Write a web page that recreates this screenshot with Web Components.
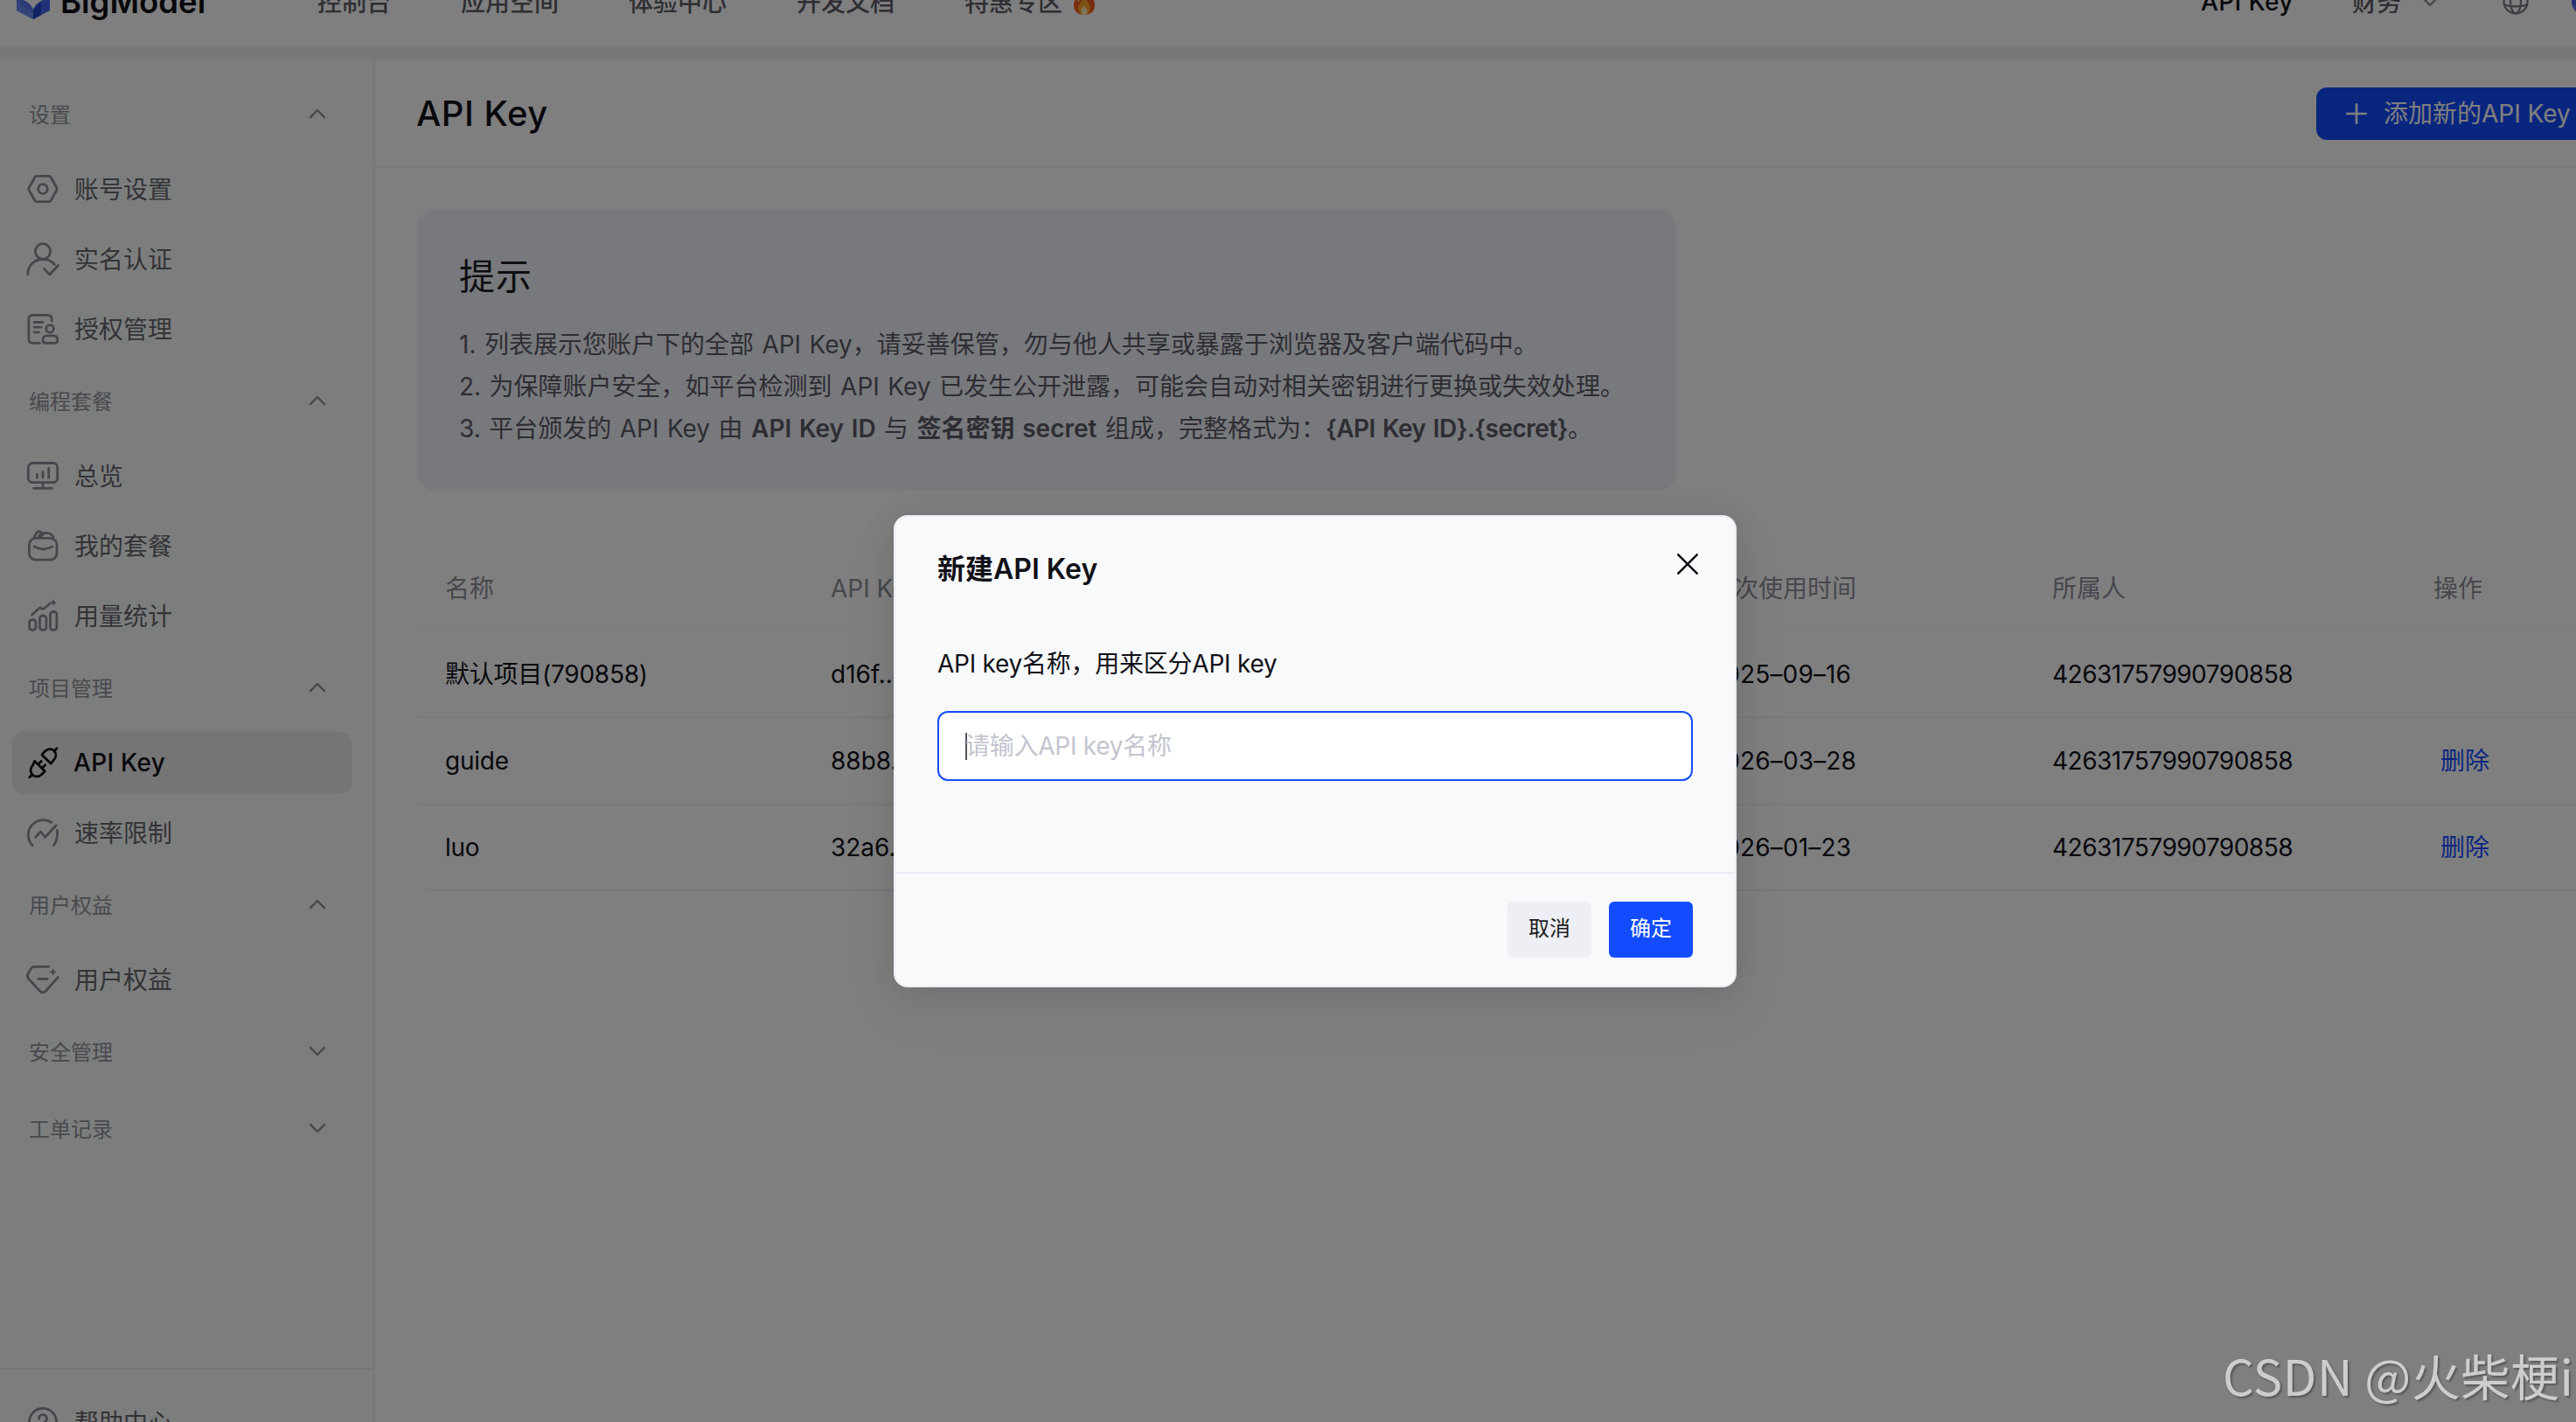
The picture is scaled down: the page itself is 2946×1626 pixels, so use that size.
<!DOCTYPE html>
<html lang="zh-CN">
<head>
<meta charset="utf-8">
<title>API Key</title>
<style>
  html, body { margin: 0; height: 1626px; overflow: hidden; background: #fff; }
  body { font-family: Inter, "Noto Sans CJK SC", sans-serif; font-size: 28px; color: #111118; }
</style>
</head>
<body>
<bm-app></bm-app>
<script>
const ICONS = {
  hex: '<path d="M13 5.4h14c1 0 1.7.5 2.2 1.3l6.7 12c.5.8.5 1.8 0 2.6l-6.7 12c-.5.8-1.2 1.3-2.2 1.3H13c-1 0-1.7-.5-2.2-1.3l-6.700-12c-.5-.8-.5-1.8 0-2.6l6.7-12c.5-.8 1.2-1.3 2.200-1.3z"/><circle cx="20" cy="20" r="5.3"/>',
  user: '<ellipse cx="20" cy="11.5" rx="8.6" ry="8.8"/><path d="M2.8 38c0-10.5 7.2-17.5 17.2-17.5 5.6 0 10.3 2.2 13.4 6"/><path d="M21.6 31.5l6.2 6.500 9.7-10.5"/>',
  doc: '<path d="M16.5 36.4H8.2c-2.5 0-4.3-1.8-4.3-4.3V8.7c0-2.5 1.8-4.3 4.3-4.3h17.7c2.5 0 4.3 1.8 4.3 4.3v2.5"/><path d="M10 12.5h10M10 18.1h8M10 23.8h5.5"/><circle cx="28" cy="19.9" r="4.3"/><path d="M24.5 27.8h7.5c2.8 0 4.8 1.7 4.8 4.6 0 2.6-1 4-3.5 4H23.5c-2.5 0-3.5-1.4-3.5-4 0-2.9 1.9-4.6 4.5-4.6z"/>',
  monitor: '<rect x="3.3" y="5.5" width="33.4" height="22.2" rx="5"/><path d="M20 28v6M9.5 34.4h21M13.4 22.3v-4M20 22.3v-7M26.7 22.3V11.5"/>',
  bag: '<rect x="4.4" y="11.4" width="31.6" height="24.8" rx="7.5"/><path d="M10 20.9c6.5 3.8 14.5 3.8 21 0M10.3 10.5C12 4.5 15 1.8 19 5.5M18 9c3-4.5 10.500-5.5 14 1.5M15.5 9.5c1.5-3 3.5-4.5 6.5-4"/>',
  chart: '<rect x="4.6" y="24.6" width="7.4" height="11.8" rx="3.2"/><rect x="16.5" y="20" width="7.4" height="16.4" rx="3.2"/><rect x="28.5" y="15.5" width="7.4" height="20.9" rx="3.2"/><path d="M7.5 19l8-7.3c1-.9 2-.9 3 0s2 .9 3 0l6.5-5.5"/><path d="M32 .8l1.2 3 3 1.2-3 1.2-1.2 3-1.2-3-3-1.2 3-1.2z" fill="currentColor" stroke="none"/>',
  plug: '<path d="M19 11.2l10.1 9.9 3-3.6c4-4.3 3.2-8.6.7-11.1s-7-2.7-10.7.8zM33 7l3-3.2M10.600 18.2l11.7 11.6-3.3 3.4c-3.7 3.7-8.3 3.4-10.9.8s-3-7.400.6-11.2zM14.5 22.2l3.7-3.7M19 26.5l3.7-3.7M8 33.5l-3.2 3.3"/>',
  gauge: '<path d="M8.2 34.8A17.2 17.2 0 0 1 29.8 8.3M36.3 17.5c.9 6.7-.2 12-3.8 17.3M11.6 25.3l6-6.3 5 6.3L35.2 11.7"/>',
  gem: '<path d="M26.5 5.4H10c-1.6 0-2.6.7-3.4 2L3.2 13c-1.4 2.3-1.2 4.2.5 6.2l13 14c2.2 2.3 4.4 2.3 6.6 0l14-15.7M14.8 19.4h10.4"/><path d="M31.6 7.2l1.3 3 3 1.3-3 1.3-1.3 3-1.3-3-3-1.3 3-1.3z" fill="currentColor" stroke="none"/>',
  help: '<circle cx="20" cy="20" r="15.6"/><path d="M15.5 16.5c0-6.500 9-6.5 9 0 0 3.5-4.5 3.5-4.5 7.5M20 27.500v.5"/>'
};

function define(name, html) {
  const tpl = document.createElement('template');
  tpl.innerHTML = html;
  customElements.define(name, class extends HTMLElement {
    constructor() {
      super();
      this.attachShadow({ mode: 'open' }).appendChild(tpl.content.cloneNode(true));
    }
  });
}

/* elements whose markup depends on their attributes */
function defineWith(name, render) {
  customElements.define(name, class extends HTMLElement {
    connectedCallback() {
      const root = this.shadowRoot || this.attachShadow({ mode: 'open' });
      root.innerHTML = render(this);
    }
  });
}

defineWith('bm-icon', el => `
<style>:host{display:block;width:40px;height:40px;flex:none}svg{display:block;overflow:visible}</style>
<svg width="40" height="40" viewBox="0 0 40 40" fill="none" stroke="currentColor" stroke-width="2.8" stroke-linecap="round" stroke-linejoin="round">${ICONS[el.getAttribute('name')]}</svg>`);

define('bm-chevron', `
<style>
  :host { display: block; flex: none; width: 20px; height: 12px; color: #8f8e99; }
  :host([down]) svg { transform: rotate(180deg); }
  svg { display: block; }
</style>
<svg width="20" height="12" viewBox="0 0 20 12" fill="none" stroke="currentColor" stroke-width="2.4" stroke-linecap="round" stroke-linejoin="round"><path d="M2 10.2L10 2l8 8.2"/></svg>`);

define('bm-logo', `
<style>
  :host { display: flex; align-items: center; gap: 12px; color: #111118; font-size: 36.5px; font-weight: 600; line-height: 44px; width: 344px; }
  svg { display: block; flex: none; }
</style>
<svg width="38" height="42" viewBox="0 0 38 42"><path d="M0 8l10 6c6 4 9 9 9 15v12L0 31z" fill="#5577ee"/><path d="M0 22l19 12v7L0 31z" fill="#6a86f2"/><path d="M38 8l-10 6c-6 4-9 9-9 15v12l19-10z" fill="#4166f0"/><path d="M19 30l9-9v15l-9 5z" fill="#2347c8"/><path d="M8 0h22v19c-6 3-9 6-11 11-2-5-5-8-11-11z" fill="#fff"/></svg>
<span>BigModel</span>`);

define('bm-topbar', `
<style>
  :host { display: block; height: 52px; overflow: hidden; background: #fff; }
  .row { display: flex; align-items: center; height: 100px; margin-top: -48px; padding-left: 19px; }
  nav { display: flex; gap: 80px; color: #5e5d66; font-weight: 500; line-height: 40px; padding-top: 2px; }
  nav span:last-child { display: flex; align-items: center; }
  .fire { margin-left: 13px; }
  .right { display: flex; align-items: center; margin-left: auto; color: #5e5d66; font-weight: 500; line-height: 40px; }
  .key { color: #111118; width: 173px; letter-spacing: .4px; }
  .fin { width: 79px; padding-top: 2px; }
  .globe { margin-left: 73px; margin-right: 49px; }
  .avatar { width: 32px; height: 32px; border-radius: 16px; margin-right: 35px; background: linear-gradient(#4a62e8 60%, #9a9ab4); }
</style>
<div class="row">
  <bm-logo></bm-logo>
  <nav><span>控制台</span><span>应用空间</span><span>体验中心</span><span>开发文档</span>
    <span>特惠专区<svg class="fire" width="24" height="28" viewBox="0 0 24 28"><path d="M11 0c5 4 7 7 7 11 1-1 1.500-2.500 1.500-4C23 10 24 14 24 17c0 7-5 11-12 11S0 24 0 17c0-4 2-7 4-9 0 2 .5 4 2 5 0-5 2-9 5-13z" fill="#f4581c"/><path d="M12 9c4 4 7 7 7 11.5 0 4.5-3 7.5-7 7.5s-7-3-7-7.5C5 16 9 14 12 9z" fill="#fba62a"/><path d="M12 18c2 2 3.500 3.500 3.500 6 0 2.500-1.500 4-3.500 4s-3.500-1.500-3.500-4c0-2.500 1.500-4 3.500-6z" fill="#fff0b0"/></svg></span></nav>
  <div class="right"><span class="key">API Key</span><span class="fin">财务</span><bm-chevron down></bm-chevron>
    <svg class="globe" width="30" height="30" viewBox="0 0 30 30" fill="none" stroke="#7b7a84" stroke-width="2.2"><circle cx="15" cy="15" r="13.5"/><ellipse cx="15" cy="15" rx="6" ry="13.5"/><path d="M2.5 10c7 2 18 2 25 0M1.8 18.5c7 2.500 19 2.500 26.400 0"/></svg>
    <div class="avatar"></div></div>
</div>`);

defineWith('bm-nav-item', el => `
<style>
  :host { display: flex; align-items: center; box-sizing: border-box; width: 390px; height: 72px; padding-left: 16px; gap: 16px; border-radius: 16px; color: #68676f; line-height: 40px; }
  span { padding-top: 2px; }
  bm-icon { color: #8f8d99; }
  :host([active]) { background: #eaeaea; color: #111118; font-weight: 500; letter-spacing: .3px; }
  :host([active]) bm-icon { color: #111118; }
  :host([active]) span { padding-top: 0; margin-left: -1px; }
</style>
<bm-icon name="${el.getAttribute('icon')}"></bm-icon><span><slot></slot></span>`);

defineWith('bm-nav-group', el => `
<style>
  :host { display: flex; flex-direction: column; gap: 8px; margin-top: 8px; }
  .head { display: flex; align-items: center; justify-content: space-between; height: 80px; width: 340px; padding-left: 20px; color: #94939c; font-size: 24px; line-height: 36px; }
  bm-chevron { margin-top: -4px; }
</style>
<div class="head"><span>${el.getAttribute('label')}</span><bm-chevron${el.hasAttribute('closed') ? ' down' : ''}></bm-chevron></div>
<slot></slot>`);

define('bm-sidebar', `
<style>
  :host { display: flex; flex-direction: column; box-sizing: border-box; width: 429px; height: 1558px; flex: none; overflow: hidden; background: #f9fcfa; border-right: 2px solid #efeff0; }
  .menu { flex: none; box-sizing: border-box; height: 1496px; padding: 16px 0 0 13px; }
  .foot { flex: none; border-top: 2px solid #eaebeb; padding: 24px 0 0 13px; }
</style>
<div class="menu">
  <bm-nav-group label="设置"><bm-nav-item icon="hex">账号设置</bm-nav-item><bm-nav-item icon="user">实名认证</bm-nav-item><bm-nav-item icon="doc">授权管理</bm-nav-item></bm-nav-group>
  <bm-nav-group label="编程套餐"><bm-nav-item icon="monitor">总览</bm-nav-item><bm-nav-item icon="bag">我的套餐</bm-nav-item><bm-nav-item icon="chart">用量统计</bm-nav-item></bm-nav-group>
  <bm-nav-group label="项目管理"><bm-nav-item icon="plug" active>API Key</bm-nav-item><bm-nav-item icon="gauge">速率限制</bm-nav-item></bm-nav-group>
  <bm-nav-group label="用户权益"><bm-nav-item icon="gem">用户权益</bm-nav-item></bm-nav-group>
  <bm-nav-group label="安全管理" closed></bm-nav-group>
  <bm-nav-group label="工单记录" closed></bm-nav-group>
</div>
<div class="foot"><bm-nav-item icon="help">帮助中心</bm-nav-item></div>`);

define('bm-page-head', `
<style>
  :host { display: flex; align-items: center; justify-content: space-between; box-sizing: border-box; height: 124px; padding: 2px 35px 0 47px; border-bottom: 2px solid #eeeeee; }
  h1 { margin: 0; font-size: 40px; font-weight: 500; line-height: 56px; letter-spacing: .5px; }
  button { display: flex; align-items: center; box-sizing: border-box; width: 324px; height: 60px; padding: 0 0 0 34px; gap: 19px; border: 0; border-radius: 12px; background: #134cff; color: #fff; font: inherit; line-height: 40px; white-space: nowrap; }
</style>
<h1>API Key</h1>
<button><svg width="24" height="24" viewBox="0 0 24 24" stroke="#fff" stroke-width="2.6" stroke-linecap="round"><path d="M12 1.3v21.4M1.3 12h21.400"/></svg><span>添加新的API Key</span></button>`);

define('bm-tips', `
<style>
  :host { display: block; box-sizing: border-box; width: 1440px; height: 321px; margin: 48px 0 0 48px; padding: 48px; border-radius: 20px; background: #f0f2f9; color: #5c5b66; }
  h2 { margin: 0 0 25px; font-size: 41px; letter-spacing: 1px; font-weight: 400; line-height: 57px; color: #1c1c22; }
  p { margin: 0; line-height: 48px; white-space: nowrap; word-spacing: 1.6px; }
  b { font-weight: 600; }
  .fmt { letter-spacing: -.5px; }
</style>
<h2>提示</h2>
<p>1. 列表展示您账户下的全部 API Key，请妥善保管，勿与他人共享或暴露于浏览器及客户端代码中。</p>
<p>2. 为保障账户安全，如平台检测到 API Key 已发生公开泄露，可能会自动对相关密钥进行更换或失效处理。</p>
<p>3. 平台颁发的 API Key 由 <b>API Key ID</b> 与 <b>签名密钥 secret</b> 组成，完整格式为：<b class="fmt">{API Key ID}.{secret}</b>。</p>`);

define('bm-key-table', `
<style>
  :host { display: block; width: 2496px; margin: 61px 0 0 48px; border-radius: 16px; overflow: hidden; }
  .r { display: grid; grid-template-columns: 441px 1005px 392px 436px auto; align-items: center; box-sizing: border-box; height: 100px; padding-left: 32px; border-bottom: 2px solid #f3f3f5; line-height: 40px; white-space: nowrap; }
  .h { color: #8f8e99; border-color: #fbfbfc; padding-top: 4px; }
  .a { height: 99px; }
  .c { height: 98px; }
  .name { letter-spacing: -.25px; }
  .date { letter-spacing: .15px; }
  .num { letter-spacing: -.5px; }
  .del { color: #134cff; padding-left: 8px; }
</style>
<div class="r h"><span>名称</span><span>API Key</span><span>上次使用时间</span><span>所属人</span><span>操作</span></div>
<div class="r a"><span class="name">默认项目(790858)</span><span>d16f...</span><span class="date">2025–09–16</span><span class="num">42631757990790858</span></div>
<div class="r"><span class="name">guide</span><span>88b8...</span><span class="date">2026–03–28</span><span class="num">42631757990790858</span><span class="del">删除</span></div>
<div class="r c"><span class="name">luo</span><span>32a6...</span><span class="date">2026–01–23</span><span class="num">42631757990790858</span><span class="del">删除</span></div>`);

define('bm-dialog', `
<style>
  :host { display: flex; flex-direction: column; box-sizing: border-box; width: 964px; height: 540px; border: 2px solid #eceef5; border-radius: 16px; background: #f8f9fb; box-shadow: 0 24px 64px 8px rgba(0,0,0,.04), 0 4px 36px rgba(0,0,0,.10); }
  header { display: flex; justify-content: space-between; align-items: flex-start; padding: 38px 42px 0 48px; height: 86px; box-sizing: border-box; }
  h3 { margin: 0; font-size: 32px; font-weight: 600; line-height: 44px; }
  header svg { margin-top: 4px; }
  .body { padding: 62px 48px 0; height: 320px; box-sizing: border-box; }
  label { display: block; line-height: 40px; margin-bottom: 34px; letter-spacing: -.25px; }
  .input { display: flex; align-items: center; box-sizing: border-box; height: 80px; padding-left: 30px; border: 2px solid #134cff; border-radius: 12px; background: #fff; color: #c3c5d0; line-height: 40px; letter-spacing: -.25px; }
  .caret { width: 2px; height: 31px; margin-right: -2px; background: #55555c; }
  footer { display: flex; justify-content: flex-end; gap: 20px; padding: 32px 48px 0; border-top: 2px solid #e9ebf3; }
  button { width: 96px; height: 64px; border: 0; border-radius: 6px; padding: 0 0 3px; background: #eeeff5; color: #1c1c22; font: inherit; font-size: 24px; line-height: 36px; }
  .ok { background: #134cff; color: #fff; }
</style>
<header><h3>新建API Key</h3><svg width="24" height="24" viewBox="0 0 24 24" stroke="#111118" stroke-width="2.6" stroke-linecap="round"><path d="M1.3 1.3l21.4 21.4M22.7 1.3L1.3 22.7"/></svg></header>
<div class="body"><label>API key名称，用来区分API key</label>
<div class="input"><i class="caret"></i><span>请输入API key名称</span></div></div>
<footer><button>取消</button><button class="ok">确定</button></footer>`);

define('bm-watermark', `
<style>
  :host { display: block; font: 400 56px/80px "Noto Sans CJK SC", sans-serif; letter-spacing: .6px; color: rgba(214,214,214,.92); text-shadow: 2px 2px 2px rgba(60,60,60,.55); white-space: nowrap; }
</style>
<span>CSDN @火柴梗i</span>`);

define('bm-app', `
<style>
  :host { display: block; position: relative; width: 3008px; height: 1626px; overflow: hidden; background: #eef0f5; }
  .body { display: flex; margin-top: 16px; height: 1558px; }
  main { flex: 1; min-width: 0; background: #fff; }
  .mask { position: absolute; inset: 0; display: flex; justify-content: center; align-items: flex-start; padding-top: 589px; box-sizing: border-box; height: 1626px; background: rgba(0,0,0,.5); }
  bm-watermark { position: absolute; left: 2542px; top: 1532px; }
</style>
<bm-topbar></bm-topbar>
<div class="body"><bm-sidebar></bm-sidebar><main><bm-page-head></bm-page-head><bm-tips></bm-tips><bm-key-table></bm-key-table></main></div>
<div class="mask"><bm-dialog></bm-dialog></div>
<bm-watermark></bm-watermark>`);
</script>
</body>
</html>
